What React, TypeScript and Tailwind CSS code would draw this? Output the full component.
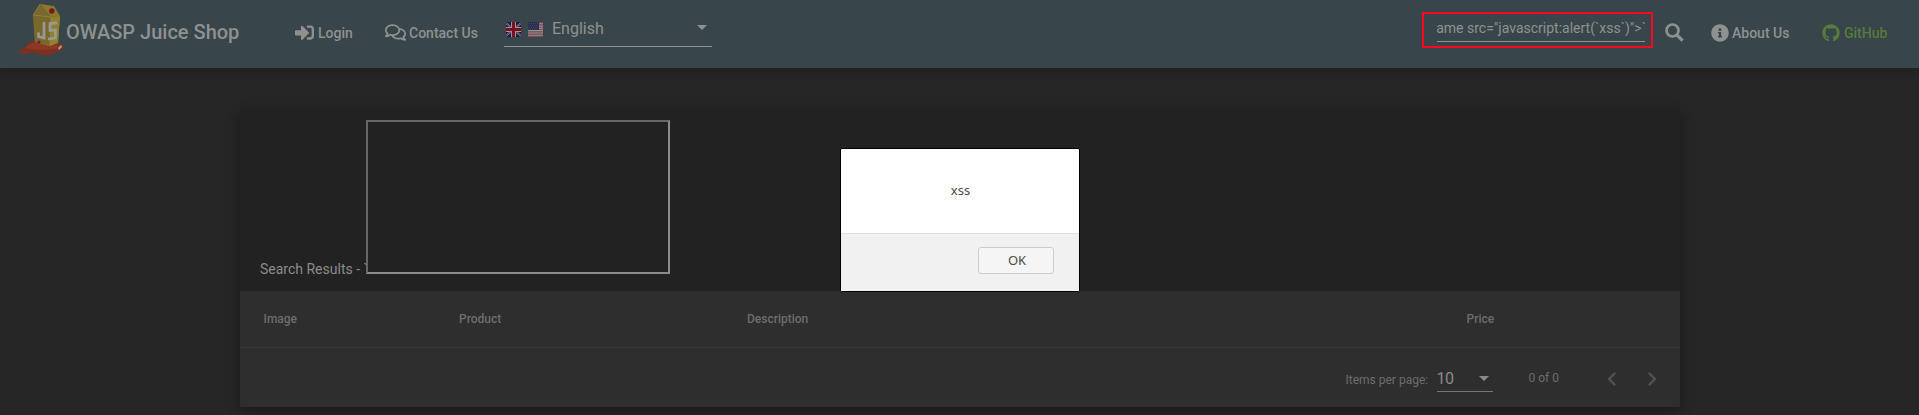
import React from 'react';
import { FaSignInAlt, FaRegComments, FaInfoCircle, FaGithub } from 'react-icons/fa';

function JuiceLogo() {
  return (
    <svg className="h-[52px] w-[48px] shrink-0" viewBox="0 0 48 52">
      <path d="M1 48 L8 43 C10 39 15 37 21 37 L40 38 C46 39 48 43 45 46 C40 47 37 50 32 51 C27 53 22 49 16 49 C11 50 5 50 1 48Z" fill="#7b3022" />
      <path d="M8 44 C11 40 15 38 21 39 L40 41 C43 43 40 45 35 45 C27 47 20 46 8 44Z" fill="#8b3922" />
      <path d="M16 11 L32 13 L43 12 L41 39 L32 42 L18 38Z" fill="#806e29" />
      <path d="M16 11 L23 0 L34 13 L33 42 L18 38Z" fill="#78682c" />
      <path d="M23 0 L37 2 L43 12 L34 13Z" fill="#8b782b" />
      <path d="M34 13 L43 12 L41 39 L33 42Z" fill="#91802e" />
      <path d="M23 0 L16 11 L34 13 M34 13 L33 42" stroke="#a08c3d" strokeWidth=".6" fill="none" />
      <circle cx="34.8" cy="7" r="2.7" fill="#721b1b" />
      <path d="M27 18 V34 L21.5 32.5 V28.5" stroke="#9a9a94" strokeWidth="2.7" fill="none" />
      <path d="M40 18.8 L33 19.4 V26.5 L38.4 26 V34 L31 35" stroke="#9a9a94" strokeWidth="2.7" fill="none" />
      <circle cx="22" cy="38" r="1.6" fill="#7b1c1c" />
      <path d="M41 44 L44 41 L45 43 L42 46Z" fill="#aaa09a" />
    </svg>
  );
}

function UkFlag() {
  return (
    <svg className="size-[15px]" viewBox="0 0 15 15">
      <path fill="#0d1d4e" d="M0 0h15v15H0z" />
      <path d="M0 1l15 13M15 1L0 14" stroke="#858b98" strokeWidth="2" />
      <path d="M0 1l15 13M15 1L0 14" stroke="#7b1020" strokeWidth=".8" />
      <path d="M7.5 0v15M0 7.5h15" stroke="#969696" strokeWidth="5" />
      <path d="M7.5 0v15M0 7.5h15" stroke="#7b1020" strokeWidth="3" />
    </svg>
  );
}

function UsFlag() {
  return (
    <svg className="size-[15px]" viewBox="0 0 15 15">
      <path fill="#969292" d="M0 0h15v15H0z" />
      <path d="M0 .6h15M0 2.9h15M0 5.2h15M0 7.5h15M0 9.8h15M0 12.1h15M0 14.4h15" stroke="#7d4650" strokeWidth="1.15" />
      <path fill="#27304f" d="M0 0h11v8H0z" />
      <path d="M1 1.5h10M0 3.5h10M1 5.5h10M0 7h10" stroke="#505870" strokeWidth=".6" strokeDasharray="1 1" />
    </svg>
  );
}

function Caret() {
  return (
    <svg className="h-[5px] w-[10px]" viewBox="0 0 10 5">
      <path d="M0 0h10L5 5z" fill="currentColor" />
    </svg>
  );
}

function SearchIcon() {
  return (
    <svg className="size-[19px]" viewBox="0 0 19 19" fill="none" stroke="currentColor">
      <circle cx="7.5" cy="7.5" r="6" strokeWidth="2.7" />
      <path d="M11.8 11.8 17.6 17.6" strokeWidth="3.2" />
    </svg>
  );
}

function Header() {
  return (
    <header className="relative flex h-[68px] items-start bg-[#38454a] text-sm font-medium text-[#8f9191] shadow-[0_3px_10px_rgba(0,0,0,0.25)]">
      <div className="flex w-[278px] pt-1 pl-[17px]">
        <JuiceLogo />
        <h1 className="ml-px pt-[13px] text-xl leading-[30px] font-medium whitespace-nowrap">OWASP Juice Shop</h1>
      </div>
      <div className="flex h-[65px] w-[226px] items-center pl-[17px]">
        <FaSignInAlt className="size-[19px]" />
        <span className="ml-1 w-[67px]">Login</span>
        <FaRegComments className="size-[21px]" />
        <span className="ml-[3px] whitespace-nowrap">Contact Us</span>
      </div>
      <div className="flex h-[47px] w-[208px] items-center border-b border-[#8f9191] pt-[12px] pl-0.5 text-base font-normal">
        <UkFlag />
        <span className="w-[7px]" />
        <UsFlag />
        <span className="ml-[9px] flex-1">English</span>
        <span className="mr-[5px] pb-1"><Caret /></span>
      </div>
      <div className="mt-3 ml-auto h-9 w-[231px] border-2 border-[#f90820] px-[13px] pt-[3px]">
        <div className="flex h-[25px] w-[208px] justify-end overflow-hidden border-b border-[#8f9191] text-sm leading-[23px] font-normal whitespace-nowrap">
          <span className="-mr-px">{'`<iframe src="javascript:alert(`xss`)">`'}</span>
        </div>
      </div>
      <div className="flex h-[65px] w-[266px] items-center pl-3">
        <SearchIcon />
        <FaInfoCircle className="ml-[27px] size-[18px]" />
        <span className="ml-[3px] w-[90px] whitespace-nowrap">About Us</span>
        <FaGithub className="size-[18px] text-[#577b3c]" />
        <span className="ml-1 text-[#577b3c]">GitHub</span>
      </div>
    </header>
  );
}

function ResultsCard() {
  return (
    <section className="mx-auto mt-[40px] h-[299px] w-[1440px] bg-[#222222] shadow-[0_4px_12px_rgba(0,0,0,0.3)]">
      <div className="flex h-[183px] items-end pb-[17px] pl-[20.5px]">
        <span className="-mb-[5px] w-[105.5px] text-sm leading-5 whitespace-nowrap text-[#8b8b8b]">Search Results - `</span>
        <div className="h-[154px] w-[304px] border-2 border-t-[#676767] border-r-[#8b8b8b] border-b-[#8b8b8b] border-l-[#676767]" />
      </div>
      <div className="h-[116px] bg-[#2e2e2e] text-xs text-[#6d6d6d]">
        <div className="flex h-[57px] items-center border-b border-[#3a3a3a] pl-6 font-medium">
          <span className="w-[195.5px]">Image</span>
          <span className="w-[288px]">Product</span>
          <span className="w-[719.5px]">Description</span>
          <span>Price</span>
        </div>
        <div className="flex h-[59px] pl-[1106px]">
          <span className="w-[91px] pt-6 leading-4 whitespace-nowrap">Items per page:</span>
          <div className="flex h-[44px] w-14 items-center justify-between border-b border-[#767676] pt-[18px] pr-1 text-base tracking-[-0.5px] text-[#8b8b8b]">
            <span>10</span>
            <Caret />
          </div>
          <span className="ml-[36px] w-[69px] pt-[22px] leading-4">0 of 0</span>
          <svg className="mt-[17px] size-7 text-[#505050]" viewBox="0 0 24 24">
            <path fill="currentColor" d="M15.41 7.41 14 6l-6 6 6 6 1.41-1.41L10.83 12z" />
          </svg>
          <svg className="mt-[17px] ml-3 size-7 text-[#505050]" viewBox="0 0 24 24">
            <path fill="currentColor" d="M10 6 8.59 7.41 13.17 12l-4.58 4.59L10 18l6-6z" />
          </svg>
        </div>
      </div>
    </section>
  );
}

function AlertDialog() {
  return (
    <div role="alertdialog" className="absolute top-[148px] left-[840px] flex h-[144px] w-[240px] flex-col rounded-[2px] border border-black bg-white font-['Noto_Sans',sans-serif] text-[13px] text-[#4c4c4c]">
      <div className="flex h-[84px] items-center justify-center pl-px">xss</div>
      <div className="flex flex-1 items-start justify-end border-t border-[#dfdfdf] bg-[#f1f1f1] pt-[13px] pr-[25px]">
        <button className="h-[27px] w-[76px] rounded-[3px] border border-[#cccccc] bg-[#f5f5f5] pl-0.5">OK</button>
      </div>
    </div>
  );
}

export default function App() {
  return (
    <div className="relative h-[415px] w-full overflow-hidden bg-[#262626] font-[Roboto,sans-serif]">
      <Header />
      <ResultsCard />
      <AlertDialog />
    </div>
  );
}
